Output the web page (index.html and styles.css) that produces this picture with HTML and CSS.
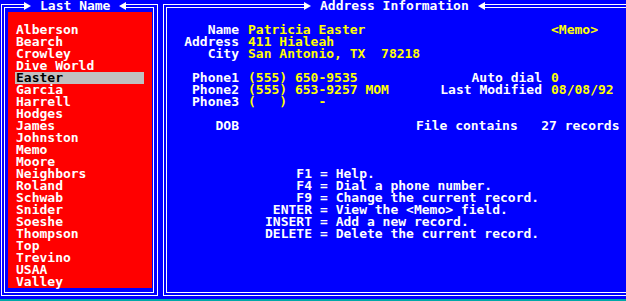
FILE: index.html
```html
<!DOCTYPE html>
<html lang="en">
<head>
  <meta charset="UTF-8" />
  <title>Phone Book</title>
  <link rel="stylesheet" href="styles.css">
</head>
<body>
  <div class="screen">
    <div class="panes">

      <section class="box names">
        <h2 class="box-title"><span class="arrow-r"></span><span class="title-text">Last Name</span><span class="arrow-l"></span></h2>
        <div class="box-frame">
          <ul class="name-list">
            <li>Alberson</li>
            <li>Bearch</li>
            <li>Crowley</li>
            <li>Dive World</li>
            <li class="selected">Easter</li>
            <li>Garcia</li>
            <li>Harrell</li>
            <li>Hodges</li>
            <li>James</li>
            <li>Johnston</li>
            <li>Memo</li>
            <li>Moore</li>
            <li>Neighbors</li>
            <li>Roland</li>
            <li>Schwab</li>
            <li>Snider</li>
            <li>Soeshe</li>
            <li>Thompson</li>
            <li>Top</li>
            <li>Trevino</li>
            <li>USAA</li>
            <li>Valley</li>
          </ul>
        </div>
      </section>

      <section class="box info">
        <h2 class="box-title"><span class="arrow-r"></span><span class="title-text">Address Information</span><span class="arrow-l"></span></h2>
        <div class="box-frame">
          <div class="fields">
            <div class="row">
              <span class="label">Name</span><span class="val">Patricia Easter</span><span></span><span class="val2">&lt;Memo&gt;</span>
            </div>
            <div class="row">
              <span class="label">Address</span><span class="val">411 Hialeah</span>
            </div>
            <div class="row">
              <span class="label">City</span><span class="val">San Antonio, TX  78218</span>
            </div>
            <div class="row skip">
              <span class="label">Phone1</span><span class="val">(555) 650-9535</span><span class="label">Auto dial</span><span class="val2">0</span>
            </div>
            <div class="row">
              <span class="label">Phone2</span><span class="val">(555) 653-9257 MOM</span><span class="label">Last Modified</span><span class="val2">08/08/92</span>
            </div>
            <div class="row">
              <span class="label">Phone3</span><span class="val">(   )    -</span>
            </div>
            <div class="row skip">
              <span class="label">DOB</span><span class="val"></span><span class="plain">File contains   27 records</span>
            </div>
          </div>

          <ul class="keys">
            <li><span class="key">F1</span><span class="desc">= Help.</span></li>
            <li><span class="key">F4</span><span class="desc">= Dial a phone number.</span></li>
            <li><span class="key">F9</span><span class="desc">= Change the current record.</span></li>
            <li><span class="key">ENTER</span><span class="desc">= View the &lt;Memo&gt; field.</span></li>
            <li><span class="key">INSERT</span><span class="desc">= Add a new record.</span></li>
            <li><span class="key">DELETE</span><span class="desc">= Delete the current record.</span></li>
          </ul>
        </div>
      </section>

    </div>
    <div class="status"></div>
  </div>
</body>
</html>
```

FILE: styles.css
```css
:root {
  --blue: #0000ff;
  --red: #ff0000;
  --white: #ffffff;
  --yellow: #ffff00;
  --gray: #c0c0c0;
  --teal: #00a8a8;
}

html, body {
  margin: 0;
  padding: 0;
  background: var(--blue);
}

body {
  font-family: "DejaVu Sans Mono", "Liberation Mono", monospace;
  font-size: 13px;
  font-weight: bold;
  line-height: 12px;
  color: var(--white);
}

ul {
  list-style: none;
  margin: 0;
  padding: 0;
}

.screen {
  width: 626px;
  height: 301px;
  overflow: hidden;
  display: flex;
  flex-direction: column;
  background: var(--blue);
}

.panes {
  display: flex;
  gap: 5px;
  padding: 4px 0 0 1px;
  height: 292px;
}

/* double line frame: outer line, 2px blue, inner line */
.box {
  position: relative;
  flex-shrink: 0;
  border: 1px solid var(--white);
  padding: 2px 3px 2px 2px;
}

.box-frame {
  box-sizing: border-box;
  height: 286px;
  border: 1px solid var(--white);
}

.box-title {
  position: absolute;
  top: -5px;
  display: flex;
  align-items: center;
  height: 12px;
  margin: 0;
  font-size: 13px;
  font-weight: bold;
  background: var(--blue);
}

.title-text {
  padding: 0 9px;
  white-space: pre;
}

.arrow-r, .arrow-l {
  width: 0;
  height: 0;
  border-top: 4.5px solid transparent;
  border-bottom: 4.5px solid transparent;
}

.arrow-r {
  border-left: 7px solid var(--white);
}

.arrow-l {
  border-right: 7px solid var(--white);
}

/* left pane */
.names .box-title {
  left: 22px;
}

.names .box-frame {
  width: 150px;
  padding: 4px 1px 4px 3px;
}

.name-list {
  box-sizing: border-box;
  height: 276px;
  padding: 12px 0 0 7px;
  background: var(--red);
}

.name-list li {
  width: 128px;
  padding-left: 1px;
  white-space: pre;
}

.name-list .selected {
  background: var(--gray);
  color: #000;
}

/* right pane */
.info .box-title {
  left: 140px;
}

.info .box-frame {
  width: 480px;
  padding-top: 16px;
}

.row {
  display: grid;
  grid-template-columns: 72px 177px 126px 1fr;
  height: 12px;
  white-space: pre;
}

.row.skip {
  margin-top: 12px;
}

.label {
  text-align: right;
}

.val, .val2 {
  color: var(--yellow);
  padding-left: 9px;
}

.val {
  min-width: 0;
}

.plain {
  grid-column: 3 / 5;
}

.keys {
  margin-top: 36px;
  padding-left: 98px;
}

.keys li {
  display: grid;
  grid-template-columns: 47px auto;
  height: 12px;
  white-space: pre;
}

.key {
  text-align: right;
}

.desc {
  padding-left: 8px;
}

.status {
  height: 2px;
  margin-top: 3px;
  background: var(--teal);
}
```
